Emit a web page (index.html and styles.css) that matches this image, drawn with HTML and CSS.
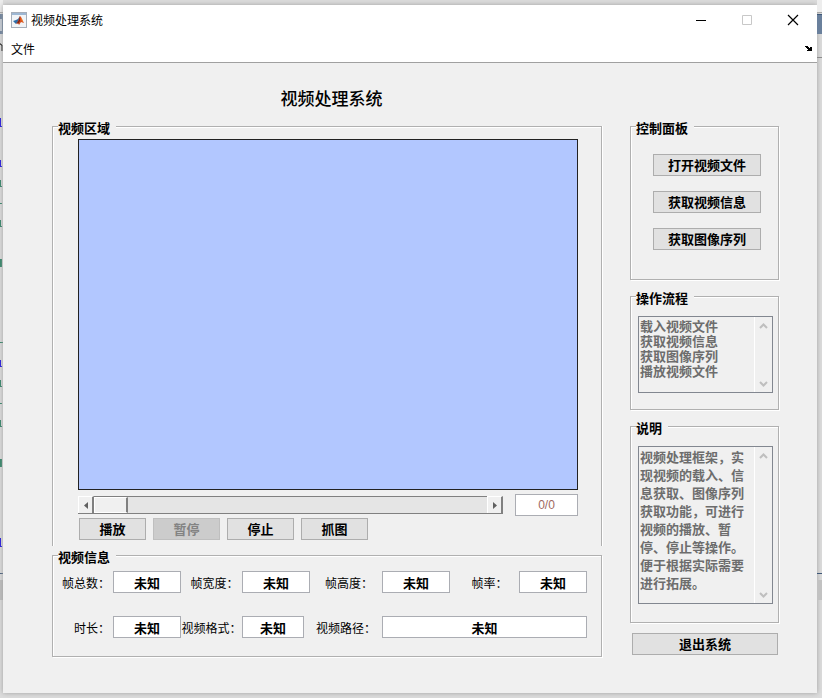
FILE: index.html
```html
<!doctype html>
<html lang="zh-CN">

<head>
    <meta charset="utf-8">
    <meta name="viewport" content="width=device-width, initial-scale=1">
    <title>视频处理系统</title>

    <link rel="stylesheet" href="styles.css">
</head>

<body>
    <!-- Edges of the editor behind the window -->
    <svg class="edge" width="3" height="698" aria-hidden="true">
        <rect width="3" height="12" fill="#ededed" />
        <rect y="12" width="3" height="1" fill="#a9a9a9" />
        <rect y="14" width="3" height="20" fill="#6a809c" />
        <rect y="19" width="2" height="12" fill="#c5ccd5" />
        <path d="M0 44h1v1h1v6" stroke="#000" fill="none" />
        <path d="M0 118h1v8h1v1h-2zM0 160h1v6h1v1h-2zM0 360h1v6h1v1h-2zM0 538h1v8h1v1h-2z" fill="#1c10e0" />
        <path d="M0 180h1v6h1v1h-2zM0 203h2v1h-2zM0 220h1v6h1v1h-2zM0 259h2v8h-2zM0 342h3v1h-3zM0 380h1v6h1v1h-2zM0 403h2v1h-2zM0 420h1v6h1v1h-2zM0 459h2v8h-2z" fill="#2d8264" />
        <rect y="573" width="3" height="1" fill="#3e5878" />
        <rect y="580" width="3" height="20" fill="#bdbdbd" />
    </svg>

    <main class="window">
        <header class="titlebar">
            <svg class="logo" width="16" height="16" viewBox="0 0 16 16" aria-hidden="true">
                <rect x="0.5" y="0.5" width="15" height="15" fill="#f1f4f7" stroke="#a5adb8" />
                <path d="M1 1h14v2h-14z" fill="#9db7d3" />
                <path d="M2 9l3-1 2-1 2-3-1 5-3 3z" fill="#2e6ea8" />
                <path d="M5 12l2-3 2-5 1 1 3 6-3-1-2 3-1-2z" fill="#d9501e" />
                <path d="M9 4l-1 4-2 3 1 1 2-3z" fill="#7a2418" />
                <path d="M10 6l1 3 1 1-1-3z" fill="#f29a2e" />
            </svg>
            <h1 class="caption">视频处理系统</h1>
            <button class="sys" type="button" aria-label="最小化">
                <svg width="12" height="12"><path d="M1 6.500h10" stroke="#000" /></svg>
            </button>
            <button class="sys" type="button" aria-label="最大化" disabled>
                <svg width="12" height="12"><path d="M1.500 1.500h9v9h-9z" stroke="#c8c8c8" fill="none" /></svg>
            </button>
            <button class="sys" type="button" aria-label="关闭">
                <svg width="12" height="12"><path d="M1 1l10 10M11 1l-10 10" stroke="#000" stroke-width="1.2" /></svg>
            </button>
        </header>

        <nav class="menubar">
            <button class="menu" type="button">文件</button>
            <svg width="7" height="5" shape-rendering="crispEdges" aria-hidden="true">
                <path d="M1 0h2v1h1v1h1v-1h2v4h-5v-1h1v-1h-1v-1h-1v-1h-1v-1z" fill="#000" />
            </svg>
        </nav>

        <div class="content">
            <section class="left">
                <h2 class="heading">视频处理系统</h2>

                <fieldset class="group video">
                    <legend>视频区域</legend>
                    <div class="screen"></div>
                    <div class="seek">
                        <div class="slider">
                            <button class="arrow" type="button" aria-label="后退">
                                <svg width="4" height="7"><path d="M4 0v7L0 3.500z" fill="#606060" /></svg>
                            </button>
                            <input class="range" type="range" min="0" max="100" value="0" aria-label="进度">
                            <button class="arrow" type="button" aria-label="前进">
                                <svg width="4" height="7"><path d="M0 0v7L4 3.500z" fill="#606060" /></svg>
                            </button>
                        </div>
                        <input class="field frame" type="text" value="0/0" aria-label="帧">
                    </div>
                    <div class="player">
                        <button class="btn" type="button">播放</button>
                        <button class="btn" type="button" disabled>暂停</button>
                        <button class="btn" type="button">停止</button>
                        <button class="btn" type="button">抓图</button>
                    </div>
                </fieldset>

                <fieldset class="group info">
                    <legend>视频信息</legend>
                    <div class="grid">
                        <label class="end" for="frames">帧总数：</label>
                        <input class="field" id="frames" type="text" value="未知">
                        <label class="mid" for="width">帧宽度：</label>
                        <input class="field" id="width" type="text" value="未知">
                        <label class="mid" for="height">帧高度：</label>
                        <input class="field" id="height" type="text" value="未知">
                        <label class="last" for="rate">帧率：</label>
                        <input class="field" id="rate" type="text" value="未知">

                        <label class="end" for="duration">时长：</label>
                        <input class="field" id="duration" type="text" value="未知">
                        <label for="format">视频格式：</label>
                        <input class="field short" id="format" type="text" value="未知">
                        <label for="path">视频路径：</label>
                        <input class="field path" id="path" type="text" value="未知">
                    </div>
                </fieldset>
            </section>

            <aside class="right">
                <fieldset class="group control">
                    <legend>控制面板</legend>
                    <button class="btn" type="button">打开视频文件</button>
                    <button class="btn" type="button">获取视频信息</button>
                    <button class="btn" type="button">获取图像序列</button>
                </fieldset>

                <fieldset class="group steps">
                    <legend>操作流程</legend>
                    <div class="box">
                        <textarea rows="5" aria-label="操作流程" disabled>载入视频文件
获取视频信息
获取图像序列
播放视频文件</textarea>
                        <div class="scroll" aria-hidden="true">
                            <svg width="9" height="6"><path d="M1 5l3.500-3.500L8 5" stroke="#bfbfbf" stroke-width="2" fill="none" /></svg>
                            <svg width="9" height="6"><path d="M1 1l3.500 3.500L8 1" stroke="#bfbfbf" stroke-width="2" fill="none" /></svg>
                        </div>
                    </div>
                </fieldset>

                <fieldset class="group notes">
                    <legend>说明</legend>
                    <div class="box">
                        <textarea rows="8" aria-label="说明" disabled>视频处理框架，实现视频的载入、信息获取、图像序列获取功能，可进行视频的播放、暂停、停止等操作。便于根据实际需要进行拓展。</textarea>
                        <div class="scroll" aria-hidden="true">
                            <svg width="9" height="6"><path d="M1 5l3.500-3.500L8 5" stroke="#bfbfbf" stroke-width="2" fill="none" /></svg>
                            <svg width="9" height="6"><path d="M1 1l3.500 3.500L8 1" stroke="#bfbfbf" stroke-width="2" fill="none" /></svg>
                        </div>
                    </div>
                </fieldset>

                <button class="btn exit" type="button">退出系统</button>
            </aside>
        </div>
    </main>

    <svg class="edge" width="5" height="698" aria-hidden="true">
        <rect width="5" height="12" fill="#ededed" />
        <rect y="12" width="5" height="1" fill="#a9a9a9" />
        <rect y="14" width="5" height="20" fill="#6a809c" />
        <rect y="14" width="5" height="1" fill="#3e5878" />
        <rect y="57" width="5" height="1" fill="#8c8c8c" />
        <rect y="573" width="5" height="1" fill="#3e5878" />
        <rect y="580" width="5" height="20" fill="#c2c2c2" />
    </svg>
</body>

</html>
```

FILE: styles.css
```css
* {
    box-sizing: border-box;
}

body {
    margin: 0;
    min-height: 100vh;
    display: flex;
    align-items: flex-start;
    background-color: #dcdcdc;
    color: #000;
    font-family: "Noto Sans CJK SC", sans-serif;
    font-size: 12px;
    overflow: hidden;
}

button,
input,
textarea {
    margin: 0;
    padding: 0;
    font-family: inherit;
    color: inherit;
}

svg {
    display: block;
}

.edge {
    flex: none;
}

/* Window frame */

.window {
    flex: 1;
    min-width: 0;
    margin: 5px 0;
    background-color: #f0f0f0;
    box-shadow: 0 0 5px #a0a0a0;
}

.titlebar {
    display: flex;
    align-items: center;
    height: 30px;
    padding-right: 1px;
    padding-left: 8px;
    background-color: #fff;
}

.caption {
    flex: 1;
    margin: 0 0 0 4px;
    font-size: 12px;
    font-weight: normal;
    line-height: 16px;
}

.sys {
    display: flex;
    align-items: center;
    justify-content: center;
    width: 46px;
    height: 30px;
    border: none;
    background: none;
}

.menubar {
    display: flex;
    align-items: center;
    justify-content: space-between;
    height: 28px;
    padding: 0 5px 0 8px;
    background-color: #fff;
    border-bottom: 1px solid #a0a0a0;
}

.menu {
    border: none;
    background: none;
    font-size: 12px;
}

/* Layout */

.content {
    display: flex;
    gap: 28px;
    padding: 23px 38px 36px 49px;
}

.left {
    flex: 1;
    min-width: 0;
}

.right {
    display: flex;
    flex-direction: column;
    gap: 7px;
    width: 149px;
    padding-top: 31px;
}

.heading {
    margin: 0 0 7px;
    padding-left: 9px;
    font-size: 17px;
    font-weight: 500;
    line-height: 24px;
    text-align: center;
}

.group {
    margin: 0;
    min-width: 0;
    border: 1px solid #b0b0b0;
    box-shadow: inset 1px 1px #fff, 1px 1px #fff;
}

legend {
    padding: 4px 6px 0 0;
    background-color: #f0f0f0;
    font-size: 13px;
    font-weight: bold;
    line-height: 14px;
}

.btn {
    height: 22px;
    border: 1px solid #adadad;
    background-color: #e1e1e1;
    font-size: 13px;
    font-weight: bold;
    line-height: 18px;
}

.btn:disabled {
    border-color: #bfbfbf;
    background-color: #ccc;
    color: #838383;
}

.field {
    width: 100%;
    min-width: 0;
    height: 22px;
    border: 1px solid #abadb3;
    background-color: #fff;
    font-size: 13px;
    font-weight: bold;
    text-align: center;
}

/* Video area */

.video {
    padding: 4px 23px 6px 25px;
    border-bottom: none;
    box-shadow: inset 1px 1px #fff, 1px 0 #fff;
}

.video legend {
    margin-left: -20px;
}

.screen {
    aspect-ratio: 500 / 351;
    border: 1px solid #222;
    background-color: #b2c7ff;
}

.seek {
    display: flex;
    align-items: center;
    gap: 12px;
    margin-top: 4px;
}

.slider {
    display: flex;
    flex: 1;
    height: 18px;
    border-bottom: 1px solid #808080;
}

.arrow {
    display: flex;
    align-items: center;
    justify-content: center;
    width: 16px;
    border: 1px solid #fff;
    border-right: 2px solid #808080;
    border-bottom: none;
    background-color: #f0f0f0;
}

.range {
    flex: 1;
    min-width: 0;
    appearance: none;
    border-top: 1px solid #808080;
    background-color: #e5e5e5;
}

.range::-webkit-slider-thumb {
    appearance: none;
    width: 34px;
    height: 16px;
    border: 1px solid #fff;
    border-right: 2px solid #808080;
    background-color: #f0f0f0;
}

.frame {
    width: 63px;
    color: #a0695f;
    font-family: "Liberation Sans", sans-serif;
    font-size: 12px;
    font-weight: normal;
}

.player {
    display: flex;
    gap: 7px;
    margin-top: 2px;
    padding-left: 1px;
}

.player .btn {
    width: 67px;
}

/* Video info */

.info {
    padding: 7px 14px 18px 0;
}

.info legend {
    margin-left: 5px;
}

.grid {
    display: grid;
    grid-template-columns: 60px 1fr 61px 1fr 72px 1fr 69px 1fr;
    align-items: center;
    row-gap: 23px;
}

.grid label {
    text-align: center;
    white-space: nowrap;
}

.grid .end {
    padding-right: 3px;
    text-align: right;
}

.grid .mid {
    padding-left: 6px;
}

.grid .last {
    padding-left: 10px;
}

.short {
    width: 62px;
}

.path {
    grid-column: span 3;
}

/* Side panels */

.control {
    display: flex;
    flex-direction: column;
    gap: 15px;
    padding: 19px 17px 29px 22px;
}

.control legend {
    margin-left: -17px;
}

.steps {
    padding: 11px 5px 16px 7px;
}

.notes {
    padding: 11px 5px 18px 7px;
}

.steps legend,
.notes legend {
    margin-left: -2px;
}

.box {
    display: flex;
    border: 1px solid #828790;
}

.box textarea {
    flex: 1;
    min-width: 0;
    padding: 1px 0 0 1px;
    border: none;
    resize: none;
    overflow: hidden;
    background: none;
    color: #6d6d6d;
    font-size: 13px;
    font-weight: bold;
}

.steps textarea {
    height: 75px;
    line-height: 15px;
}

.notes textarea {
    height: 156px;
    line-height: 18px;
}

.scroll {
    display: flex;
    flex-direction: column;
    align-items: center;
    justify-content: space-between;
    width: 18px;
    padding: 6px 0 5px;
    border-left: 1px solid #fff;
}

.exit {
    margin: 3px 1px 0 2px;
}
```
